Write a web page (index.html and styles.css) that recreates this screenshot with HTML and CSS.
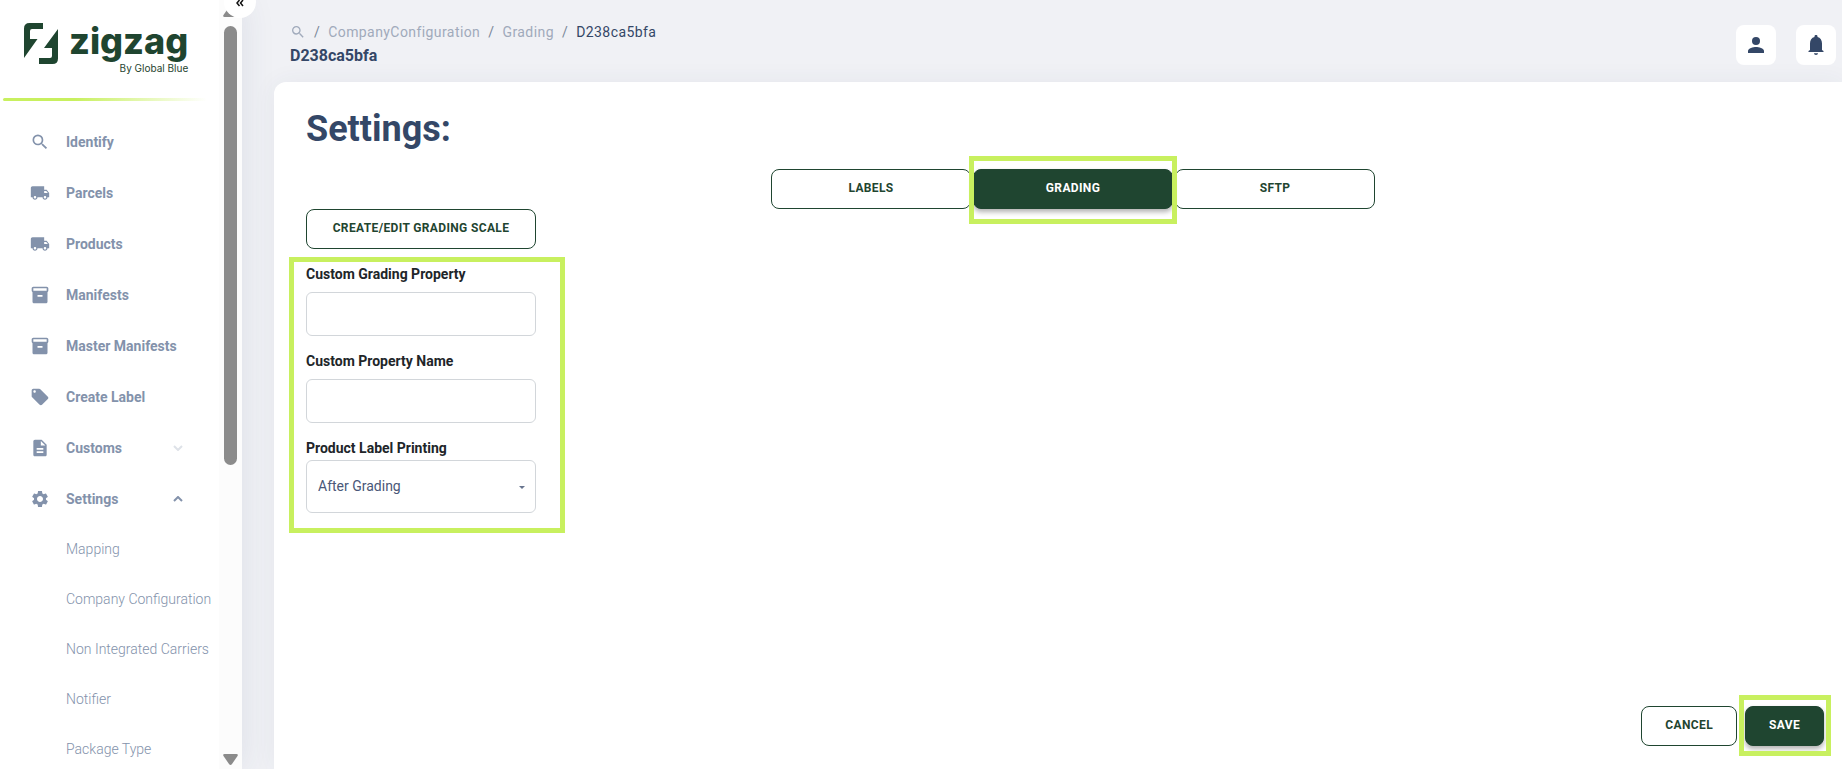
FILE: index.html
```html
<!DOCTYPE html>
<html lang="en">
<head>
<meta charset="UTF-8">
<meta name="viewport" content="width=device-width, initial-scale=1.0">
<title>Company Configuration - Grading</title>
<link rel="stylesheet" href="styles.css">
</head>
<body>

	<!-- icons shared by the menu and the header -->
	<svg width="0" height="0" class="sprite">
		<symbol id="search" viewBox="0 0 24 24"><path d="M15.5 14h-.79l-.28-.27A6.47 6.47 0 0 0 16 9.5 6.5 6.5 0 1 0 9.5 16c1.61 0 3.09-.59 4.23-1.57l.27.28v.79l5 4.99L20.49 19l-4.99-5zm-6 0C7.01 14 5 11.99 5 9.5S7.01 5 9.5 5 14 7.01 14 9.5 11.99 14 9.5 14z"/></symbol>
		<symbol id="truck" viewBox="0 0 24 24"><path d="M20 8h-3V4H3c-1.1 0-2 .9-2 2v11h2c0 1.66 1.34 3 3 3s3-1.34 3-3h6c0 1.66 1.34 3 3 3s3-1.34 3-3h2v-5l-3-4zM6 18.5c-.83 0-1.5-.67-1.5-1.5s.67-1.5 1.5-1.5 1.5.67 1.5 1.5-.67 1.5-1.5 1.5zm13.5-9l1.96 2.5H17V9.5h2.5zm-1.5 9c-.83 0-1.5-.67-1.5-1.5s.67-1.5 1.5-1.5 1.5.67 1.5 1.5-.67 1.5-1.5 1.5z"/></symbol>
		<symbol id="box" viewBox="0 0 24 24"><path d="M20 2H4c-1 0-2 .9-2 2v3.01c0 .72.43 1.34 1 1.69V20c0 1.1 1.1 2 2 2h14c.9 0 2-.9 2-2V8.7c.57-.35 1-.97 1-1.69V4c0-1.1-1-2-2-2zm-5 12H9v-2h6v2zm5-7H4V4h16v3z"/></symbol>
		<symbol id="tag" viewBox="0 0 24 24"><path d="M21.41 11.58l-9-9C12.05 2.22 11.55 2 11 2H4c-1.1 0-2 .9-2 2v7c0 .55.22 1.05.59 1.42l9 9c.36.36.86.58 1.41.58s1.05-.22 1.41-.59l7-7c.37-.36.59-.86.59-1.41s-.23-1.06-.59-1.42zM5.5 7C4.67 7 4 6.33 4 5.5S4.67 4 5.5 4 7 4.67 7 5.5 6.33 7 5.5 7z"/></symbol>
		<symbol id="file" viewBox="0 0 24 24"><path d="M14 2H6c-1.1 0-1.99.9-1.99 2L4 20c0 1.1.89 2 1.99 2H18c1.1 0 2-.9 2-2V8l-6-6zm2 16H8v-2h8v2zm0-4H8v-2h8v2zm-3-5V3.5L18.5 9H13z"/></symbol>
		<symbol id="gear" viewBox="0 0 24 24"><path d="M19.14 12.94c.04-.3.06-.61.06-.94 0-.32-.02-.64-.07-.94l2.03-1.58c.18-.14.23-.41.12-.61l-1.92-3.32c-.12-.22-.37-.29-.59-.22l-2.39.96c-.5-.38-1.03-.7-1.62-.94l-.36-2.54c-.04-.24-.24-.41-.48-.41h-3.84c-.24 0-.43.17-.47.41l-.36 2.54c-.59.24-1.13.57-1.62.94l-2.39-.96c-.22-.08-.47 0-.59.22L2.74 8.87c-.12.21-.08.47.12.61l2.03 1.58c-.05.3-.09.63-.09.94s.02.64.07.94l-2.03 1.58c-.18.14-.23.41-.12.61l1.92 3.32c.12.22.37.29.59.22l2.39-.96c.5.38 1.03.7 1.62.94l.36 2.54c.05.24.24.41.48.41h3.84c.24 0 .44-.17.47-.41l.36-2.54c.59-.24 1.13-.56 1.62-.94l2.39.96c.22.08.47 0 .59-.22l1.92-3.32c.12-.22.07-.47-.12-.61l-2.01-1.58zM12 15.6c-1.98 0-3.6-1.62-3.6-3.6s1.62-3.6 3.6-3.6 3.6 1.62 3.6 3.6-1.62 3.6-3.6 3.6z"/></symbol>
	</svg>

	<aside class="sidebar">
		<div class="menu">
			<a href="#" class="logo" aria-label="zigzag by Global Blue">
				<svg class="logo-mark" width="34" height="42" viewBox="0 0 34 42" fill="#1f4530">
					<path d="M0 35V5.500Q0 0 5.500 0H19V6H8Q6 6 6 8V16H13.500Z"/>
					<path d="M34 6V35.500Q34 41 28.500 41H15V35H26Q28 35 28 33V25H20Z"/>
				</svg>
				<span class="logo-text">
					<span class="logo-name">zigzag</span>
					<span class="logo-by">By Global Blue</span>
				</span>
			</a>
			<div class="divider"></div>
			<nav>
				<ul class="nav">
					<li><a href="#"><svg class="icon"><use href="#search"/></svg>Identify</a></li>
					<li><a href="#"><svg class="icon"><use href="#truck"/></svg>Parcels</a></li>
					<li><a href="#"><svg class="icon"><use href="#truck"/></svg>Products</a></li>
					<li><a href="#"><svg class="icon"><use href="#box"/></svg>Manifests</a></li>
					<li><a href="#"><svg class="icon"><use href="#box"/></svg>Master Manifests</a></li>
					<li><a href="#"><svg class="icon"><use href="#tag"/></svg>Create Label</a></li>
					<li><a href="#"><svg class="icon"><use href="#file"/></svg>Customs
						<svg class="chevron closed" viewBox="0 0 10 6"><path d="M1 1l4 4 4-4"/></svg></a></li>
					<li><a href="#"><svg class="icon"><use href="#gear"/></svg>Settings
						<svg class="chevron" viewBox="0 0 10 6"><path d="M1 5l4-4 4 4"/></svg></a>
						<ul class="subnav">
							<li><a href="#">Mapping</a></li>
							<li><a href="#">Company Configuration</a></li>
							<li><a href="#">Non Integrated Carriers</a></li>
							<li><a href="#">Notifier</a></li>
							<li><a href="#">Package Type</a></li>
						</ul>
					</li>
				</ul>
			</nav>
		</div>
		<div class="scroll">
			<svg width="15" height="11" viewBox="0 0 15 11"><path d="M1.500 11h12q2 0 1-2L9 1q-1.500-2-3 0L.5 9q-1 2 1 2z"/></svg>
			<div class="track"><div class="thumb"></div></div>
			<svg width="15" height="11" viewBox="0 0 15 11"><path d="M1.500 0h12q2 0 1 2L9 10q-1.500 2-3 0L.5 2q-1-2 1-2z"/></svg>
		</div>
		<button type="button" class="collapse" aria-label="Collapse menu">
			<svg width="8" height="8" viewBox="0 0 8 8"><path d="M3.500 1L1 4l2.500 3M7 1L4.500 4 7 7"/></svg>
		</button>
	</aside>

	<main class="main">
		<header class="header">
			<div>
				<nav class="breadcrumb">
					<a href="#" aria-label="Search"><svg class="crumb-icon"><use href="#search"/></svg></a>
					<span class="sep">/</span>
					<a href="#">CompanyConfiguration</a>
					<span class="sep">/</span>
					<a href="#">Grading</a>
					<span class="sep">/</span>
					<span class="current">D238ca5bfa</span>
				</nav>
				<h6 class="page-title">D238ca5bfa</h6>
			</div>
			<div class="actions">
				<button type="button" class="icon-btn" aria-label="Account">
					<svg width="24" height="24" viewBox="0 0 24 24"><circle cx="12" cy="8" r="4"/><path d="M4 20v-2c0-2.700 5.300-4 8-4s8 1.300 8 4v2z"/></svg>
				</button>
				<button type="button" class="icon-btn" aria-label="Notifications">
					<svg width="24" height="24" viewBox="0 0 24 24"><path d="M12 22c1.100 0 2-.8 2-1.700h-4c0 .9.900 1.700 2 1.700zM18 17v-6.500c0-3.300-1.600-5.800-4.500-6.500v-.7C13.500 2.500 12.800 2 12 2s-1.500.500-1.500 1.300V4C7.600 4.700 6 7.200 6 10.500V17l-1.500 1v1h15v-1z"/></svg>
				</button>
			</div>
		</header>

		<section class="card">
			<h1>Settings:</h1>
			<div class="tabs">
				<button type="button" class="btn">Labels</button>
				<button type="button" class="btn btn-dark marked">Grading</button>
				<button type="button" class="btn">SFTP</button>
			</div>
			<form class="form" id="gradingForm">
				<button type="button" class="btn btn-scale">Create/Edit Grading Scale</button>
				<div class="fields marked">
					<div class="field">
						<label for="gradingProperty">Custom Grading Property</label>
						<input type="text" id="gradingProperty">
					</div>
					<div class="field">
						<label for="propertyName">Custom Property Name</label>
						<input type="text" id="propertyName">
					</div>
					<div class="field field-select">
						<label for="labelPrinting">Product Label Printing</label>
						<select id="labelPrinting">
							<option>After Grading</option>
						</select>
						<span class="caret"></span>
					</div>
				</div>
			</form>
			<div class="footer">
				<button type="button" class="btn">Cancel</button>
				<button type="submit" form="gradingForm" class="btn btn-dark marked">Save</button>
			</div>
		</section>
	</main>

</body>
</html>
```
FILE: styles.css
```css
* {
	box-sizing: border-box;
}

body {
	margin: 0;
	height: 100vh;
	display: flex;
	overflow: hidden;
	background: #f0f1f5;
	color: #344767;
	font-family: Roboto, "Liberation Sans", sans-serif;
	font-size: 14px;
	line-height: 20px;
}

a {
	color: inherit;
	text-decoration: none;
}

ul {
	list-style: none;
	margin: 0;
	padding: 0;
}

button, input, select {
	font-family: inherit;
}

.sprite {
	position: absolute;
}

/* sidebar */
.sidebar {
	position: relative;
	flex: none;
	display: flex;
	width: 242px;
	background: #fff;
	box-shadow: 0 0 32px rgba(52, 71, 103, 0.1);
}

.menu {
	flex: 1;
	overflow: hidden;
}

.logo {
	display: flex;
	gap: 11px;
	height: 98px;
	padding: 23px 0 0 24px;
	color: #1f4530;
}

.logo-text {
	display: flex;
	flex-direction: column;
	align-items: flex-end;
	font-family: Inter, sans-serif;
}

.logo-name {
	font-size: 36px;
	font-weight: 800;
	line-height: 36px;
}

.logo-by {
	font-size: 10px;
	line-height: 18px;
}

.divider {
	height: 3px;
	margin: 0 12px 0 3px;
	border-radius: 2px;
	background: linear-gradient(90deg, #c8f05f 35%, #fff);
}

.nav {
	padding-top: 15px;
}

.nav a {
	display: flex;
	align-items: center;
	height: 51px;
	padding-left: 30px;
	color: #8392ab;
	font-weight: 700;
	white-space: nowrap;
}

.icon {
	width: 20px;
	height: 20px;
	margin-right: 16px;
	fill: #8392ab;
}

.chevron {
	width: 10px;
	height: 6px;
	margin: 0 36px 0 auto;
	fill: none;
	stroke: #8392ab;
	stroke-width: 2;
}

.closed {
	stroke: #dee2e8;
}

.nav .subnav a {
	height: 50px;
	padding-left: 66px;
	font-weight: 300;
}

.scroll {
	display: flex;
	flex-direction: column;
	align-items: center;
	width: 23px;
	padding: 6px 0 4px;
	background: #fcfcfc;
	fill: #8b8b8b;
}

.scroll svg {
	flex: none;
}

.track {
	flex: 1;
	padding: 9px 0;
}

.thumb {
	width: 13px;
	height: 61%;
	border-radius: 7px;
	background: #8b8b8b;
}

.collapse {
	position: absolute;
	top: -14px;
	right: -14px;
	width: 32px;
	height: 32px;
	padding: 0;
	border: 0;
	border-radius: 50%;
	background: #fff;
}

.collapse path {
	fill: none;
	stroke: #111;
	stroke-width: 1.5;
}

/* header */
.main {
	flex: 1;
	display: flex;
	flex-direction: column;
	padding-left: 32px;
}

.header {
	display: flex;
	justify-content: space-between;
	height: 82px;
	padding: 21px 6px 0 16px;
}

.breadcrumb {
	display: flex;
	align-items: center;
	gap: 8px;
	height: 21px;
	color: #a0aabb;
	letter-spacing: 0.03em;
}

.crumb-icon {
	display: block;
	width: 16px;
	height: 16px;
	fill: #a0aabb;
}

.sep {
	color: #7b8899;
}

.current {
	color: #344767;
}

.page-title {
	margin: 3px 0 0;
	font-size: 16px;
	font-weight: 700;
	line-height: 22px;
}

.actions {
	display: flex;
	gap: 20px;
	padding-top: 4px;
}

.icon-btn {
	display: flex;
	align-items: center;
	justify-content: center;
	width: 40px;
	height: 40px;
	padding: 0;
	border: 0;
	border-radius: 8px;
	background: #fff;
	fill: #344767;
}

/* content */
.card {
	flex: 1;
	display: flex;
	flex-direction: column;
	padding: 24px 2px 23px 32px;
	border-top-left-radius: 12px;
	background: #fff;
	box-shadow: 0 0 24px rgba(52, 71, 103, 0.06);
}

h1 {
	margin: 0;
	font-size: 36px;
	font-weight: 700;
	line-height: 46px;
}

.btn {
	height: 40px;
	padding: 0 23px 2px;
	border: 1px solid #1f4530;
	border-radius: 8px;
	background: #fff;
	color: #1f4530;
	font-size: 12px;
	font-weight: 700;
	letter-spacing: 0.03em;
	text-transform: uppercase;
}

.btn-dark {
	background: #1f4530;
	color: #fff;
	box-shadow: 0 3px 5px rgba(0, 0, 0, 0.3);
}

/* green frame round a control */
.marked {
	position: relative;
}

.marked::after {
	content: "";
	position: absolute;
	border: 5px solid #c8f05f;
	pointer-events: none;
}

.tabs {
	display: flex;
	justify-content: center;
	gap: 2px;
	margin-top: 17px;
}

.tabs .btn {
	width: 200px;
}

.tabs .marked::after {
	inset: -14px -5px -16px;
}

.form {
	width: 230px;
}

.btn-scale {
	width: 100%;
}

.fields {
	margin-top: 15px;
}

.fields::after {
	inset: -7px -29px -20px -17px;
}

.field {
	position: relative;
	margin-bottom: 15px;
}

.field label {
	display: block;
	color: #212529;
	font-weight: 700;
}

.field input, .field select {
	display: block;
	width: 100%;
	border: 1px solid #d2d6da;
	border-radius: 6px;
	background: #fff;
}

.field input {
	height: 44px;
	margin-top: 8px;
}

.field select {
	appearance: none;
	height: 53px;
	margin-top: 2px;
	padding: 0 11px 2px;
	color: #495778;
	font-size: 14px;
}

.field-select {
	margin-bottom: 0;
}

.caret {
	position: absolute;
	right: 11px;
	bottom: 24px;
	border: 3px solid transparent;
	border-top-color: #67748e;
	border-bottom: 0;
}

.footer {
	display: flex;
	justify-content: flex-end;
	gap: 8px;
	margin-top: auto;
	padding-right: 16px;
}

.footer .marked::after {
	inset: -12px -8px -11px -7px;
}
```
